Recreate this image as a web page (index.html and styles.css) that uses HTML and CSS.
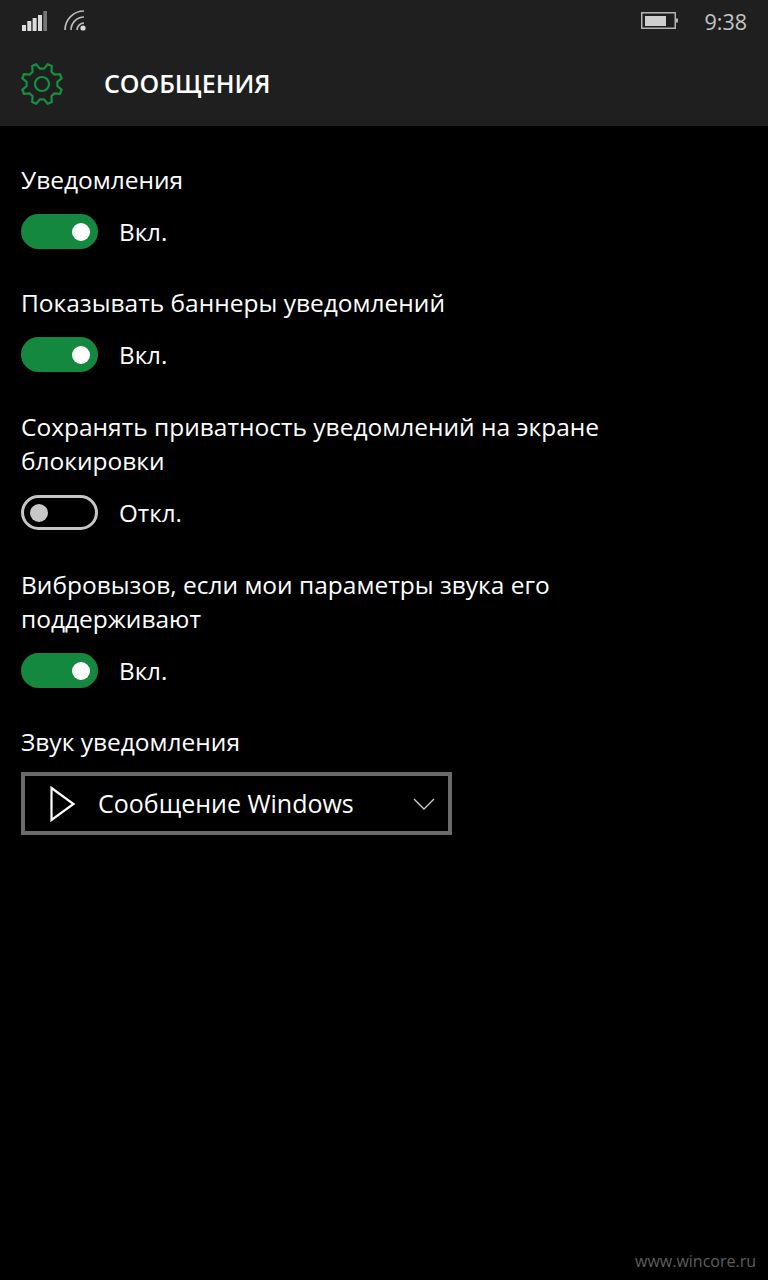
FILE: index.html
```html
<!DOCTYPE html>
<html lang="ru">
<head>
<meta charset="utf-8">
<title>Сообщения</title>
<link rel="stylesheet" href="styles.css">
</head>
<body>
<div class="screen">
  <header class="top">
    <div class="status">
      <svg class="signal" width="26" height="22" viewBox="0 0 26 22">
        <rect x="0" y="15" width="4" height="6" fill="#dcdcdc"/>
        <rect x="5.3" y="11" width="4" height="10" fill="#dcdcdc"/>
        <rect x="10.6" y="8" width="4" height="13" fill="#dcdcdc"/>
        <rect x="16" y="5" width="4" height="16" fill="#dcdcdc"/>
        <rect x="21.3" y="1" width="3.7" height="20" fill="#777"/>
      </svg>
      <svg class="wifi" width="24" height="24" viewBox="0 0 24 24" fill="none" stroke="#bcbcbc" stroke-width="1.7">
        <path d="M1 21 A19 19 0 0 1 20 2"/>
        <path d="M7 21 A13 13 0 0 1 20 8"/>
        <path d="M13 21 A7 7 0 0 1 20 14"/>
        <circle cx="19" cy="19" r="2.6" fill="#d8d8d8" stroke="none"/>
      </svg>
      <span class="spacer"></span>
      <svg class="battery" width="38" height="20" viewBox="0 0 38 20">
        <rect x="0.75" y="1.75" width="33.5" height="15.5" fill="none" stroke="#b4b4b4" stroke-width="1.5"/>
        <rect x="4" y="5" width="21" height="10" fill="#cfcfcf"/>
        <rect x="34" y="7.5" width="3" height="4" fill="#b4b4b4"/>
      </svg>
      <span class="time">9:38</span>
    </div>
    <div class="titlebar">
      <svg class="gear" width="44" height="44" viewBox="-22 -22 44 44" fill="none" stroke="#14903f" stroke-width="2.2">
        <path d="M2.02 -15.37 L5.82 -19.66 L9.78 -18.02 L9.44 -12.3 L12.3 -9.44 L18.02 -9.78 L19.66 -5.82 L15.37 -2.02 L15.37 2.02 L19.66 5.82 L18.02 9.78 L12.3 9.44 L9.44 12.3 L9.78 18.02 L5.82 19.66 L2.02 15.37 L-2.02 15.37 L-5.82 19.66 L-9.78 18.02 L-9.44 12.3 L-12.3 9.44 L-18.02 9.78 L-19.66 5.82 L-15.37 2.02 L-15.37 -2.02 L-19.66 -5.82 L-18.02 -9.78 L-12.3 -9.44 L-9.44 -12.3 L-9.78 -18.02 L-5.82 -19.66 L-2.02 -15.37 Z"/>
        <circle cx="0" cy="0" r="7"/>
      </svg>
      <h1 class="title">СООБЩЕНИЯ</h1>
    </div>
  </header>
  <main class="content">
    <section class="setting">
      <div class="label">Уведомления</div>
      <div class="toggle-row"><span class="toggle on"><span class="knob"></span></span><span class="state">Вкл.</span></div>
    </section>
    <section class="setting">
      <div class="label">Показывать баннеры уведомлений</div>
      <div class="toggle-row"><span class="toggle on"><span class="knob"></span></span><span class="state">Вкл.</span></div>
    </section>
    <section class="setting nudge">
      <div class="label">Сохранять приватность уведомлений на экране блокировки</div>
      <div class="toggle-row"><span class="toggle off"><span class="knob"></span></span><span class="state">Откл.</span></div>
    </section>
    <section class="setting nudge">
      <div class="label">Вибровызов, если мои параметры звука его поддерживают</div>
      <div class="toggle-row"><span class="toggle on"><span class="knob"></span></span><span class="state">Вкл.</span></div>
    </section>
    <section class="setting">
      <div class="label">Звук уведомления</div>
      <div class="select">
        <svg class="play" width="26" height="36" viewBox="0 0 26 36" fill="none" stroke="#fff" stroke-width="2.2"><path d="M1.5 2 L23.5 18 L1.5 34 Z"/></svg>
        <span class="select-text">Сообщение Windows</span>
        <svg class="chevron" width="22" height="12" viewBox="0 0 22 12" fill="none" stroke="#c8c8c8" stroke-width="1.4"><path d="M1 1 L11 11 L21 1"/></svg>
      </div>
    </section>
  </main>
  <div class="watermark">www.wincore.ru</div>
</div>
</body>
</html>
```
FILE: styles.css
```css
* { box-sizing: border-box; }
html, body { margin: 0; padding: 0; background: #000; }
.screen {
  position: relative;
  width: 768px;
  height: 1280px;
  overflow: hidden;
  background: #000;
  color: #fff;
  font-family: "Open Sans", "Noto Sans", "Liberation Sans", sans-serif;
}
.top { height: 126px; background: #1f1f1f; }
.status { display: flex; align-items: center; height: 42px; padding: 0 21px 0 22px; }
.wifi { margin-left: 16px; }
.spacer { flex: 1; }
.time { margin-left: 25px; font-size: 21.5px; color: #c4c4c4; }
.titlebar { display: flex; align-items: center; height: 84px; padding-left: 20px; }
.title { margin: -2px 0 0 40px; font-size: 25px; font-weight: 600; line-height: 32px; }
.content { padding: 37px 21px 0; display: flex; flex-direction: column; gap: 37px; }
.nudge { margin-top: 1px; }
.label { width: 620px; font-size: 24.5px; line-height: 34px; }
.toggle-row { display: flex; align-items: center; gap: 21px; height: 35px; margin-top: 17px; }
.toggle { display: flex; align-items: center; width: 77px; height: 35px; border-radius: 18px; padding: 0 8px; }
.toggle.on { background: #14883f; justify-content: flex-end; }
.toggle.off { border: 3px solid #c6c6c6; padding: 0 6px; }
.knob { width: 18px; height: 18px; border-radius: 50%; background: #fff; }
.off .knob { background: #c8c8c8; }
.state { font-size: 24.2px; line-height: 34px; }
.select {
  display: flex;
  align-items: center;
  width: 431px;
  height: 63px;
  margin-top: 13px;
  padding: 0 13px 0 25px;
  border: 4px solid #6a6a6a;
}
.select-text { margin: -2px 0 0 22px; flex: 1; font-size: 25px; }
.watermark {
  position: absolute;
  right: 12px;
  bottom: 8px;
  font-size: 16px;
  color: #5e5e5e;
}
```
